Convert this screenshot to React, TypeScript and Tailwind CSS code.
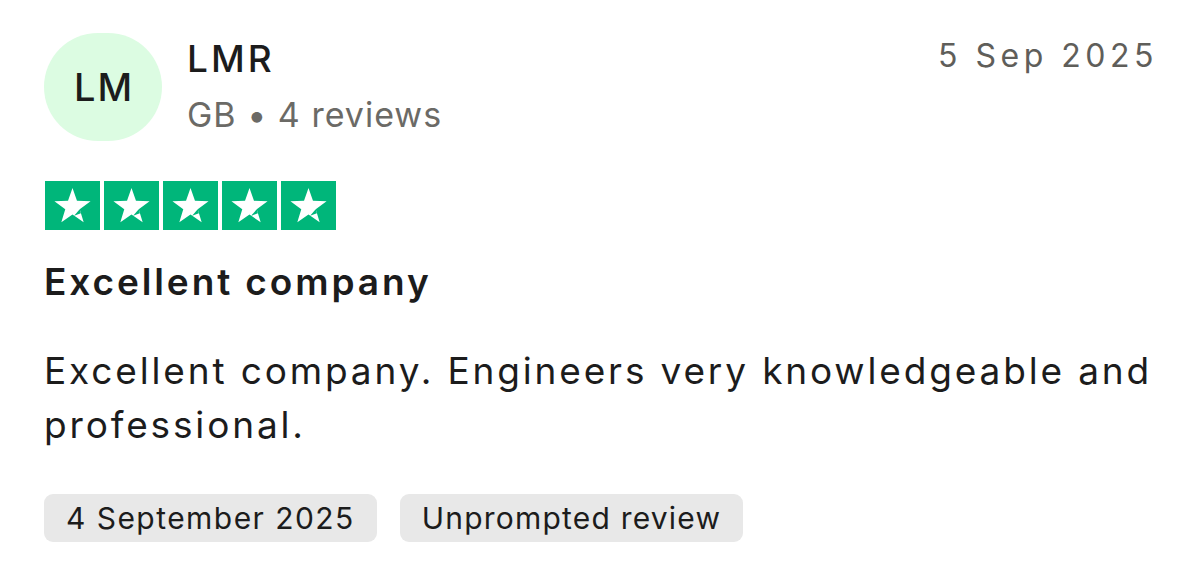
import React from "react";

function Star() {
  return (
    <div className="w-[55px] h-[49px] bg-[#00b67a] flex items-center justify-center">
      <svg width="55" height="49" viewBox="0 0 54 49">
        <polygon
          points="27,7 31.47,19.85 45.07,20.13 34.23,28.35 38.17,41.37 27,33.6 15.83,41.37 19.77,28.35 8.93,20.13 22.53,19.85"
          fill="#ffffff"
        />
        <polygon points="34.23,28.35 35.4,32.2 28.6,34.7" fill="#00b67a" />
      </svg>
    </div>
  );
}

export default function App() {
  const font = { fontFamily: "Inter, 'Noto Sans', sans-serif" };
  return (
    <div className="w-[1200px] h-[580px] bg-white text-[#1c1c1c] pl-[44px] pr-[47px] pt-[33px]" style={font}>
      <div className="flex justify-between items-start">
        <div className="flex items-start gap-[25px]">
          <div className="w-[118px] h-[108px] rounded-full bg-[#dcfce2] flex items-center justify-center text-[38px] font-medium tracking-[2px] pl-[2px]">
            LM
          </div>
          <div className="flex flex-col pt-[2px]">
            <div className="text-[37px] leading-[48px] font-medium tracking-[3px]">LMR</div>
            <div className="text-[34px] leading-[48px] text-[#6b6a66] mt-[8px] tracking-[1px]">GB • 4 reviews</div>
          </div>
        </div>
        <div className="text-[32px] leading-[44px] text-[#5f5e5a] tracking-[4.5px] pt-[1px] mr-[-5px]">5 Sep 2025</div>
      </div>
      <div className="flex gap-[4px] mt-[40px] ml-[1px]">
        <Star />
        <Star />
        <Star />
        <Star />
        <Star />
      </div>
      <div className="text-[37px] leading-[48px] font-semibold mt-[28px] tracking-[2.9px]">Excellent company</div>
      <div className="text-[37px] leading-[54px] mt-[38px] tracking-[2.85px] mr-[-12px]">
        Excellent company. Engineers very knowledgeable and professional.
      </div>
      <div className="flex gap-[23px] mt-[42px]">
        <div className="h-[48px] px-[22px] rounded-[9px] bg-[#e8e8e8] flex items-center text-[30px] tracking-[1.45px]">
          4 September 2025
        </div>
        <div className="h-[48px] px-[22px] rounded-[9px] bg-[#e8e8e8] flex items-center text-[30px] tracking-[1.2px]">
          Unprompted review
        </div>
      </div>
    </div>
  );
}
